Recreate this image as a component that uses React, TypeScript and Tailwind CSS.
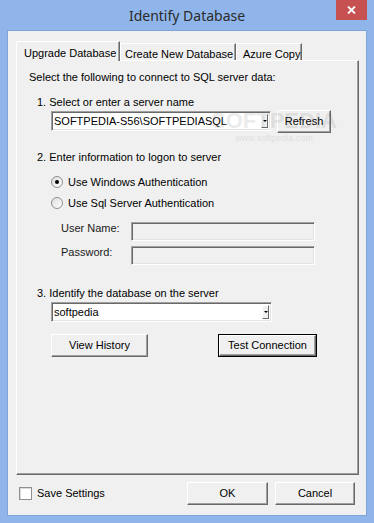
import React from "react";

const font = { fontFamily: '"Liberation Sans", Arial, sans-serif' };

// classic 3D edges
const raised =
  "border border-t-white border-l-white border-r-[#696969] border-b-[#696969] shadow-[inset_-1px_-1px_0_#a0a0a0]";
const sunken =
  "border border-t-[#a0a0a0] border-l-[#a0a0a0] border-r-white border-b-white shadow-[inset_1px_1px_0_#696969,inset_-1px_-1px_0_#e3e3e3]";

const Button = ({ label, w, isDefault }: { label: string; w: string; isDefault?: boolean }) => (
  <div className={`${w} h-[23px] ${isDefault ? "border border-black" : ""}`}>
    <div className={`w-full h-full bg-[#f0f0f0] ${raised} flex items-center justify-center text-[11px] text-black`}>
      {label}
    </div>
  </div>
);

const Combo = ({ value, w }: { value: string; w: string }) => (
  <div className={`${w} h-[20px] bg-white ${sunken} flex items-center`}>
    <span className="flex-1 pl-[2px] text-[11px] text-black leading-none">{value}</span>
    <div className="w-[7px] h-[14px] mr-[2px] bg-[#f0f0f0] border border-t-white border-l-white border-r-[#696969] border-b-[#696969] flex items-center justify-center">
      <div className="w-0 h-0 border-l-[2px] border-r-[2px] border-t-[2px] border-l-transparent border-r-transparent border-t-black" />
    </div>
  </div>
);

const Radio = ({ checked, label }: { checked?: boolean; label: string }) => (
  <div className="h-[14px] flex items-center">
    <div className="w-[12px] h-[12px] rounded-full border border-[#8e8f8f] bg-gradient-to-br from-[#dcdcdc] to-white flex items-center justify-center">
      {checked && <div className="w-[4px] h-[4px] rounded-full bg-black" />}
    </div>
    <span className="ml-[5px] text-[11px] text-black">{label}</span>
  </div>
);

const Field = ({ label }: { label: string }) => (
  <div className="flex items-start pl-[44px]">
    <span className="w-[70px] text-[11px] leading-[13px] text-[#1a1a1a]">{label}</span>
    <div className={`w-[184px] h-[19px] bg-[#f0f0f0] ${sunken}`} />
  </div>
);

export default function App() {
  return (
    <div className="w-[374px] h-[523px] bg-[#8fb5ea] overflow-hidden" style={font}>
      {/* title bar */}
      <div className="relative h-[30px] flex items-center justify-center">
        <span className="text-[14px] text-[#2b2b2b]" style={{ fontFamily: '"Noto Sans", sans-serif' }}>
          Identify Database
        </span>
        <div className="absolute top-0 right-[7px] w-[31px] h-[20px] bg-[#c75050] flex items-center justify-center">
          <svg width="9" height="8" viewBox="0 0 9 8">
            <path d="M1 0.5 L8 7.5 M8 0.5 L1 7.5" stroke="white" strokeWidth="1.8" />
          </svg>
        </div>
      </div>

      {/* client area */}
      <div className="ml-[7px] w-[360px] h-[486px] border border-[#7fa4da] bg-[#f0f0f0] flex flex-col pt-[10px] pb-[10px]">
        {/* tabs */}
        <div className="flex items-end h-[19px] pl-[8px] text-[11px] text-black">
          <div className="relative z-10 w-[104px] h-[20px] mb-[-1px] bg-[#f0f0f0] border border-b-0 border-t-white border-l-white border-r-[#696969] shadow-[inset_-1px_0_0_#a0a0a0] flex items-start pt-[3px] pl-[7px]">
            Upgrade Database
          </div>
          <div className="w-[116px] h-[17px] bg-[#f0f0f0] border border-b-0 border-t-white border-l-white border-r-[#696969] shadow-[inset_-1px_0_0_#a0a0a0] flex items-start pt-[2px] pl-[4px]">
            Create New Database
          </div>
          <div className="w-[66px] h-[17px] bg-[#f0f0f0] border border-b-0 border-t-white border-l-white border-r-[#696969] shadow-[inset_-1px_0_0_#a0a0a0] flex items-start pt-[2px] pl-[6px]">
            Azure Copy
          </div>
        </div>

        {/* tab panel */}
        <div className={`relative ml-[8px] w-[343px] h-[415px] ${raised} text-[11px] text-black`}>
          <div className="h-[14px] mt-[9px] pl-[12px] flex items-center">
            Select the following to connect to SQL server data:
          </div>

          <div className="h-[14px] mt-[11px] pl-[20px] flex items-center">1. Select or enter a server name</div>
          <div className="h-[24px] pl-[34px] flex items-center">
            <Combo value="SOFTPEDIA-S56\SOFTPEDIASQL" w="w-[220px]" />
            <div className="ml-[6px]">
              <Button label="Refresh" w="w-[54px]" />
            </div>
          </div>

          <div className="h-[14px] mt-[17px] pl-[20px] flex items-center">2. Enter information to logon to server</div>
          <div className="mt-[11px] pl-[34px]">
            <Radio checked label="Use Windows Authentication" />
          </div>
          <div className="mt-[7px] pl-[34px]">
            <Radio label="Use Sql Server Authentication" />
          </div>
          <div className="mt-[12px]">
            <Field label="User Name:" />
          </div>
          <div className="mt-[5px]">
            <Field label="Password:" />
          </div>

          <div className="h-[14px] mt-[21px] pl-[20px] flex items-center">3. Identify the database on the server</div>
          <div className="mt-[2px] pl-[34px]">
            <Combo value="softpedia" w="w-[221px]" />
          </div>
          <div className="mt-[12px] pl-[34px] flex items-center">
            <Button label="View History" w="w-[97px]" />
            <div className="ml-[70px]">
              <Button label="Test Connection" w="w-[99px]" isDefault />
            </div>
          </div>

          {/* watermark */}
          <div className="pointer-events-none absolute left-[194px] top-[48px] flex flex-col items-center opacity-[0.12]">
            <span className="text-[22px] leading-[24px] text-[#606060] font-bold">SOFTPEDIA</span>
            <span className="text-[9px] leading-[10px] text-[#606060]">www.softpedia.com</span>
          </div>
        </div>

        {/* bottom row */}
        <div className="mt-[7px] h-[23px] pl-[11px] pr-[11px] flex items-center text-[11px] text-black">
          <div className="w-[13px] h-[13px] bg-white border border-[#8e8f8f] shadow-[inset_1px_1px_0_#dcdcdc]" />
          <span className="ml-[5px]">Save Settings</span>
          <div className="ml-auto">
            <Button label="OK" w="w-[81px]" />
          </div>
          <div className="ml-[7px]">
            <Button label="Cancel" w="w-[80px]" />
          </div>
        </div>
      </div>
    </div>
  );
}
